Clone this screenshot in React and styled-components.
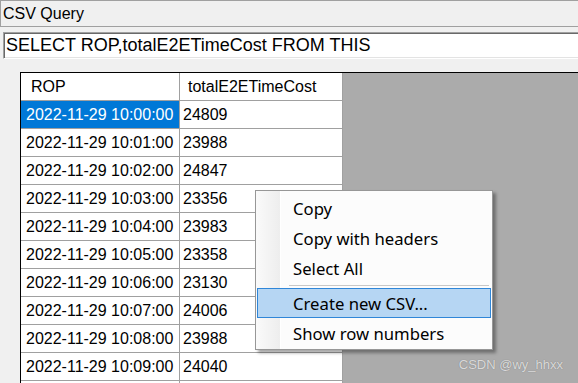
import React from "react";
import styled, { createGlobalStyle } from "styled-components";

const GlobalStyle = createGlobalStyle`
  html,
  body {
    margin: 0;
    padding: 0;
    background-color: #f0f0f0;
    overflow: hidden;
  }
`;

const Window = styled.div`
  position: relative;
  width: 578px;
  height: 383px;
  overflow: hidden;
  display: flex;
  flex-direction: column;
  background-color: #f0f0f0;
  font-family: "Liberation Sans", Arial, sans-serif;
  color: #000;
`;

const TitleBar = styled.div`
  height: 25px;
  display: flex;
  align-items: center;
  padding-left: 2px;
  border-top: 1px solid #a0a0a0;
  border-bottom: 1px solid #a0a0a0;
  border-left: 1px solid #a0a0a0;
  font-size: 16px;
  flex-shrink: 0;
`;

const QueryRow = styled.div`
  padding: 5px 0 0 3px;
  flex-shrink: 0;
`;

const QueryInput = styled.input`
  display: block;
  box-sizing: border-box;
  width: calc(100% + 20px);
  height: 27px;
  margin: 0;
  padding: 0 2px;
  border-style: solid;
  border-width: 1px;
  border-color: #a0a0a0 #fff #fff #a0a0a0;
  box-shadow: inset 1px 1px 0 #696969, inset -1px -1px 0 #e3e3e3;
  background-color: #fff;
  font-family: "Liberation Sans", Arial, sans-serif;
  font-size: 18px;
  color: #000;
  outline: none;
`;

const GridArea = styled.div`
  flex: 1;
  margin: 13px 0 0 20px;
  border-top: 1px solid #000;
  border-left: 1px solid #000;
  background-color: #ababab;
  overflow: hidden;
`;

const Row = styled.div`
  display: flex;
`;

const Cell = styled.div`
  box-sizing: content-box;
  width: ${(props) => props.w}px;
  height: 27px;
  display: flex;
  align-items: center;
  padding-left: ${(props) => props.pad}px;
  border-right: 1px solid #a0a0a0;
  border-bottom: 1px solid #a0a0a0;
  background-color: ${(props) => (props.selected ? "#0078d7" : "#fff")};
  color: ${(props) => (props.selected ? "#fff" : "#000")};
  font-size: 16px;
  white-space: nowrap;
  overflow: hidden;
`;

const Menu = styled.div`
  position: absolute;
  left: 255px;
  top: 190px;
  width: 238px;
  box-sizing: border-box;
  padding: 2px 1px 1px 1px;
  border: 1px solid #979797;
  background-color: #fcfcfc;
  box-shadow: 3px 3px 3px rgba(0, 0, 0, 0.35);
  font-family: "Noto Sans", "Open Sans", sans-serif;
  font-size: 16.7px;

  &::before {
    content: "";
    position: absolute;
    left: 0;
    top: 0;
    bottom: 0;
    width: 24px;
    background: linear-gradient(to right, #fafafa, #ededed);
    border-right: 1px solid #fff;
  }
`;

const MenuItem = styled.div`
  position: relative;
  box-sizing: border-box;
  height: 30px;
  display: flex;
  align-items: center;
  padding-left: 35px;
  border: 1px solid ${(props) => (props.active ? "#2f86d8" : "transparent")};
  background-color: ${(props) => (props.active ? "#b6d6f3" : "transparent")};
  white-space: nowrap;
`;

const Separator = styled.div`
  position: relative;
  height: 1px;
  margin: 2px 2px 2px 32px;
  background-color: #c8c8c8;
`;

const Watermark = styled.div`
  position: absolute;
  right: 15px;
  top: 357px;
  font-family: "Liberation Sans", Arial, sans-serif;
  font-size: 13px;
  color: rgba(255, 255, 255, 0.72);
  text-shadow: 0 0 1px rgba(0, 0, 0, 0.35);
`;

const rows = [
  ["2022-11-29 10:00:00", "24809"],
  ["2022-11-29 10:01:00", "23988"],
  ["2022-11-29 10:02:00", "24847"],
  ["2022-11-29 10:03:00", "23356"],
  ["2022-11-29 10:04:00", "23983"],
  ["2022-11-29 10:05:00", "23358"],
  ["2022-11-29 10:06:00", "23130"],
  ["2022-11-29 10:07:00", "24006"],
  ["2022-11-29 10:08:00", "23988"],
  ["2022-11-29 10:09:00", "24040"],
  // next row only peeks in below the fold
  ["", ""],
];

const menuItems = [
  "Copy",
  "Copy with headers",
  "Select All",
  "-",
  "Create new CSV...",
  "Show row numbers",
];

const App = () => {
  return (
    <>
      <GlobalStyle />
      <Window>
        <TitleBar>CSV Query</TitleBar>
        <QueryRow>
          <QueryInput
            readOnly
            defaultValue="SELECT ROP,totalE2ETimeCost FROM THIS"
          />
        </QueryRow>
        <GridArea>
          <Row>
            <Cell w={148} pad={10}>
              ROP
            </Cell>
            <Cell w={154} pad={8}>
              totalE2ETimeCost
            </Cell>
          </Row>
          {rows.map(([rop, cost], i) => (
            <Row key={i}>
              <Cell w={153} pad={5} selected={i === 0}>
                {rop}
              </Cell>
              <Cell w={159} pad={3}>
                {cost}
              </Cell>
            </Row>
          ))}
        </GridArea>
        <Menu>
          {menuItems.map((item, i) =>
            item === "-" ? (
              <Separator key={i} />
            ) : (
              <MenuItem key={item} active={item === "Create new CSV..."}>
                {item}
              </MenuItem>
            )
          )}
        </Menu>
        <Watermark>CSDN @wy_hhxx</Watermark>
      </Window>
    </>
  );
};

export default App;
